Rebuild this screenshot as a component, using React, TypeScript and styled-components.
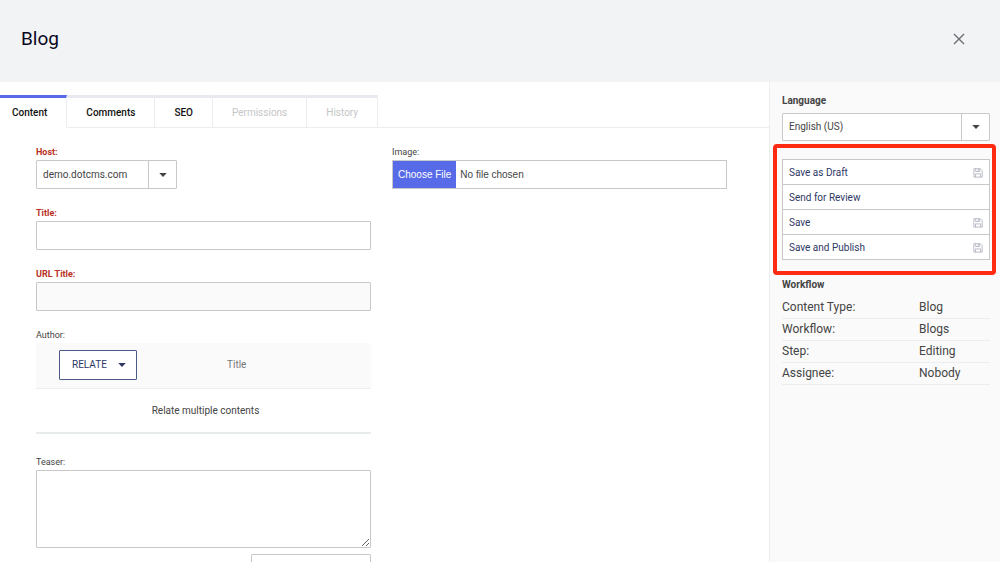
import React from "react";
import styled, { createGlobalStyle } from "styled-components";

const GlobalStyle = createGlobalStyle`
  *, *::before, *::after { box-sizing: border-box; }
  html { scrollbar-width: none; }
  body {
    margin: 0;
    background: #fff;
    color: #444;
    font-family: Roboto, "Liberation Sans", sans-serif;
    font-size: 10px;
    line-height: 16px;
  }
  button, input, select, textarea { font: inherit; color: inherit; margin: 0; }
`;

const Page = styled.div`
  display: flex;
  flex-direction: column;
  min-height: 100vh;
`;

const Header = styled.header`
  display: flex;
  align-items: center;
  justify-content: space-between;
  height: 82px;
  padding: 0 32px 4px 21px;
  background: #f1f3f4;
`;

const PageTitle = styled.h1`
  margin: 0;
  font-size: 19px;
  line-height: 24px;
  font-weight: 400;
  color: #0a0725;
`;

const CloseButton = styled.button`
  display: flex;
  padding: 0;
  border: 0;
  background: none;
  color: #6b6d75;
`;

const Columns = styled.div`
  display: flex;
  flex: 1;
`;

const Main = styled.main`
  flex: 1;
  min-width: 0;
  padding-top: 13px;
`;

const Tabs = styled.div`
  display: flex;
  border-bottom: 1px solid #ebeef0;
`;

const Tab = styled.button<{ $active?: boolean }>`
  height: 33px;
  margin-bottom: -1px;
  padding: 0 19px 0 ${(p) => (p.$active ? "12px" : "19px")};
  border: 0;
  border-top: 3px solid ${(p) => (p.$active ? "#576be8" : "#e9eaf0")};
  border-right: 1px solid #ebeef0;
  border-bottom: 1px solid ${(p) => (p.$active ? "#fff" : "#ebeef0")};
  background: #fff;
  font-weight: 500;
  color: #111;

  &:disabled {
    color: #c6c6c6;
    font-weight: 400;
  }
`;

const Form = styled.form`
  display: grid;
  grid-template-columns: 1fr 1fr;
  gap: 21px;
  padding: 16px 42px 16px 36px;
`;

const FormColumn = styled.div`
  display: flex;
  flex-direction: column;
  gap: 16px;
  min-width: 0;
`;

const Field = styled.div`
  display: flex;
  flex-direction: column;
`;

const Label = styled.label<{ $required?: boolean }>`
  font-size: 9px;
  line-height: 16px;
  font-weight: ${(p) => (p.$required ? 700 : 400)};
  color: ${(p) => (p.$required ? "#b9301f" : "#444")};
`;

const TextInput = styled.input`
  width: 100%;
  height: 29px;
  padding: 0 6px;
  border: 1px solid #c8c8c8;
  border-radius: 1px;
  background: #fff;

  &:read-only { background: #fafafa; }
`;

const CounterInput = styled(TextInput)`
  width: 120px;
  margin-top: 6px;
  align-self: flex-end;
`;

const TextArea = styled.textarea`
  display: block;
  width: 100%;
  height: 78px;
  padding: 6px;
  border: 1px solid #c8c8c8;
  border-radius: 1px;
  background: #fff;
  resize: both;
`;

const FileInput = styled.input`
  width: 100%;
  height: 29px;
  border: 1px solid #c8c8c8;
  font-family: "Liberation Sans", Arial, sans-serif;
  line-height: 27px;

  &::file-selector-button {
    height: 27px;
    margin: 0 4px 0 0;
    padding: 0 5px;
    border: 0;
    background: #576be8;
    color: #fff;
    font: inherit;
  }
`;

const SelectBox = styled.div<{ $compact?: boolean }>`
  display: grid;
  grid-template-columns: 1fr 28px;
  align-items: center;
  width: ${(p) => (p.$compact ? "141px" : "100%")};
  height: ${(p) => (p.$compact ? "29px" : "28px")};
  border: 1px solid #c8c8c8;
  border-radius: 1px;
  background: #fff;
`;

const Select = styled.select`
  width: 100%;
  height: 100%;
  padding: 0 6px;
  border: 0;
  appearance: none;
  background: none;
  color: #444;
`;

const CaretCell = styled.span`
  display: flex;
  align-items: center;
  justify-content: center;
  height: 100%;
  border-left: 1px solid #c8c8c8;
`;

const RelationTable = styled.table`
  width: 100%;
  margin-bottom: 4px;
  border-collapse: collapse;
  border-bottom: 2px solid #e9eced;
  table-layout: fixed;

  thead tr {
    height: 45px;
    background: #fafafa;
    border-bottom: 1px solid #ebefef;
  }
  th {
    padding: 0;
    font-weight: 400;
    color: #777;
    text-align: left;
  }
  th:first-child { width: 191px; padding-left: 23px; }
  td {
    height: 45px;
    padding: 2px 0 0 4px;
    text-align: center;
  }
`;

const RelateButton = styled.button`
  display: flex;
  align-items: center;
  gap: 11px;
  height: 30px;
  padding: 0 10px 0 12px;
  border: 1px solid #4c5a86;
  border-radius: 1px;
  background: #fff;
  color: #2d3864;
`;

const Sidebar = styled.aside`
  width: 231px;
  flex: none;
  padding: 11px 10px 10px 12px;
  border-left: 1px solid #ebeef0;
  background: #fafafa;
`;

const SideLabel = styled.label`
  display: block;
  padding-bottom: 4px;
  font-weight: 700;
  line-height: 16px;
`;

const SideHeading = styled.h2`
  margin: 0 0 4px;
  font-size: 10px;
  font-weight: 700;
  line-height: 16px;
`;

const Actions = styled.div`
  position: relative;
  margin: 18px 0 17px;
  border: 1px solid #c8c8c8;
  border-bottom: 0;

  &::after {
    content: "";
    position: absolute;
    inset: -16px -7px -15px -10px;
    border: 4px solid #ff2a12;
    border-radius: 4px;
    pointer-events: none;
  }
`;

const ActionButton = styled.button`
  display: flex;
  align-items: center;
  justify-content: space-between;
  width: 100%;
  height: 25px;
  padding: 1px 6px 0;
  border: 0;
  border-bottom: 1px solid #c8c8c8;
  background: #fff;
  color: #2d3864;
`;

const InfoTable = styled.table`
  width: 100%;
  border-collapse: collapse;
  font-size: 12px;
  line-height: 21px;

  tr { border-bottom: 1px solid #ebeef0; }
  th, td { padding: 0; font-weight: 400; text-align: left; }
  th { width: 137px; }
`;

const Caret = () => (
  <svg width="8" height="4" viewBox="0 0 8 4" aria-hidden="true">
    <path d="M0.3 0h7.4L4.3 3.7q-.3.3-.6 0z" fill="currentColor" />
  </svg>
);

const CloseIcon = () => (
  <svg width="18" height="18" viewBox="0 0 18 18" aria-hidden="true">
    <path d="M4 4l10 10M14 4L4 14" stroke="currentColor" strokeWidth="1.4" fill="none" />
  </svg>
);

const SaveIcon = () => (
  <svg width="10" height="10" viewBox="0 0 10 10" fill="none" stroke="#b3b6c2" strokeWidth="0.9" aria-hidden="true">
    <path d="M0.9 0.7h6.4l1.9 1.9v6.5H0.9z" />
    <path d="M2.7 0.7v2.8h4V0.7" />
    <path d="M2.5 9.1V5.9h5.1v3.2" />
    <path d="M5.3 1v1.8" />
  </svg>
);

const tabs = [
  { name: "Content", active: true },
  { name: "Comments" },
  { name: "SEO" },
  { name: "Permissions", disabled: true },
  { name: "History", disabled: true },
];

const actions = [
  { name: "Save as Draft", saves: true },
  { name: "Send for Review", saves: false },
  { name: "Save", saves: true },
  { name: "Save and Publish", saves: true },
];

const info = [
  ["Content Type:", "Blog"],
  ["Workflow:", "Blogs"],
  ["Step:", "Editing"],
  ["Assignee:", "Nobody"],
];

export default function App() {
  return (
    <Page>
      <GlobalStyle />
      <Header>
        <PageTitle>Blog</PageTitle>
        <CloseButton aria-label="Close"><CloseIcon /></CloseButton>
      </Header>
      <Columns>
        <Main>
          <Tabs role="tablist">
            {tabs.map((t) => (
              <Tab key={t.name} role="tab" aria-selected={!!t.active} $active={t.active} disabled={t.disabled}>
                {t.name}
              </Tab>
            ))}
          </Tabs>
          <Form>
            <FormColumn>
              <Field>
                <Label $required htmlFor="host">Host:</Label>
                <SelectBox $compact>
                  <Select id="host"><option>demo.dotcms.com</option></Select>
                  <CaretCell><Caret /></CaretCell>
                </SelectBox>
              </Field>
              <Field>
                <Label $required htmlFor="title">Title:</Label>
                <TextInput id="title" />
              </Field>
              <Field>
                <Label $required htmlFor="url-title">URL Title:</Label>
                <TextInput id="url-title" readOnly />
              </Field>
              <Field>
                <Label as="span">Author:</Label>
                <RelationTable>
                  <thead>
                    <tr>
                      <th><RelateButton type="button">RELATE <Caret /></RelateButton></th>
                      <th>Title</th>
                    </tr>
                  </thead>
                  <tbody>
                    <tr><td colSpan={2}>Relate multiple contents</td></tr>
                  </tbody>
                </RelationTable>
              </Field>
              <Field>
                <Label htmlFor="teaser">Teaser:</Label>
                <TextArea id="teaser" />
                <CounterInput aria-label="Teaser length" />
              </Field>
            </FormColumn>
            <FormColumn>
              <Field>
                <Label htmlFor="image">Image:</Label>
                <FileInput id="image" type="file" />
              </Field>
            </FormColumn>
          </Form>
        </Main>
        <Sidebar>
          <SideLabel htmlFor="language">Language</SideLabel>
          <SelectBox>
            <Select id="language"><option>English (US)</option></Select>
            <CaretCell><Caret /></CaretCell>
          </SelectBox>
          <Actions>
            {actions.map((a) => (
              <ActionButton key={a.name}>
                {a.name}
                {a.saves && <SaveIcon />}
              </ActionButton>
            ))}
          </Actions>
          <SideHeading>Workflow</SideHeading>
          <InfoTable>
            <tbody>
              {info.map(([name, value]) => (
                <tr key={name}><th scope="row">{name}</th><td>{value}</td></tr>
              ))}
            </tbody>
          </InfoTable>
        </Sidebar>
      </Columns>
    </Page>
  );
}
